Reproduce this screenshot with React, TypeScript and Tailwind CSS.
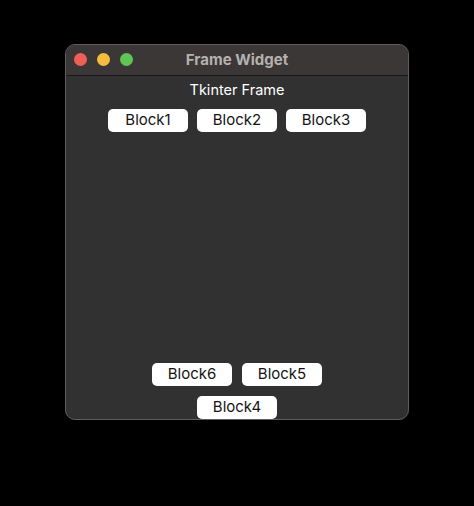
import React from 'react';

const font = { fontFamily: 'Inter, "Liberation Sans", sans-serif' };

function Block({ label }: { label: string }) {
  return (
    <div className="flex h-[23px] w-[80px] items-center justify-center rounded-[5px] bg-white text-[15px] text-[#141414]">
      {label}
    </div>
  );
}

export default function App() {
  return (
    <div className="h-[506px] w-[474px] bg-black pl-[65px] pt-[44px]" style={font}>
      <div className="flex h-[376px] w-[344px] flex-col overflow-hidden rounded-[10px] border border-[#5e5e5e] bg-[#313131]">
        <div className="relative flex h-[30px] shrink-0 items-center justify-center bg-[#3a3736]">
          <div className="absolute left-[8px] top-[8px] flex gap-[10px]">
            <span className="h-[13px] w-[13px] rounded-full bg-[#ee5f57]" />
            <span className="h-[13px] w-[13px] rounded-full bg-[#f5bd40]" />
            <span className="h-[13px] w-[13px] rounded-full bg-[#5fc553]" />
          </div>
          <span className="text-[15px] font-bold text-[#b5b1ae]">Frame Widget</span>
        </div>
        <div className="h-px shrink-0 bg-[#171717]" />
        <div className="flex flex-1 flex-col items-center">
          <div className="mt-[5px] text-[14.5px] leading-[18px] text-white">Tkinter Frame</div>
          <div className="mt-[10px] flex gap-[9px]">
            <Block label="Block1" />
            <Block label="Block2" />
            <Block label="Block3" />
          </div>
          <div className="mt-auto flex gap-[10px]">
            <Block label="Block6" />
            <Block label="Block5" />
          </div>
          <div className="mt-[10px]">
            <Block label="Block4" />
          </div>
        </div>
      </div>
    </div>
  );
}
